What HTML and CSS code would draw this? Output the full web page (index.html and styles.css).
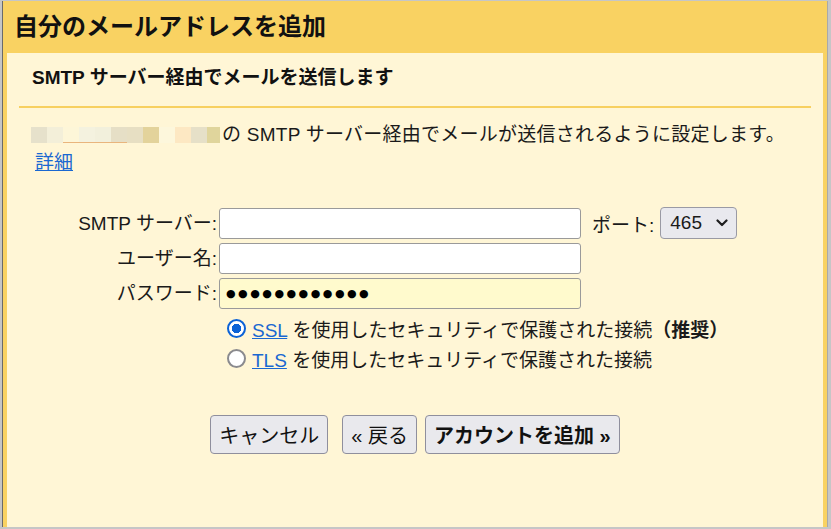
FILE: index.html
```html
<!DOCTYPE html>
<html lang="ja">
<head>
<meta charset="utf-8">
<title>自分のメールアドレスを追加</title>
<link rel="stylesheet" href="styles.css">
</head>
<body>
<div class="window">
  <div class="dialog">
    <div class="header">
      <h1 class="title">自分のメールアドレスを追加</h1>
    </div>
    <div class="panel">
      <h2 class="subtitle">SMTP サーバー経由でメールを送信します</h2>
      <div class="intro">
        <p class="desc"><span class="masked"><span class="blk b1"></span><span class="blk b2"></span><span class="blk b3 ul"></span><span class="blk b4 ul"></span><span class="blk b5 ul"></span><span class="blk b6 ul"></span><span class="blk b7"></span><span class="blk b8"></span><span class="blk b9"></span><span class="blk b10"></span><span class="blk b11"></span><span class="blk b12"></span></span>の SMTP サーバー経由でメールが送信されるように設定します。</p>
        <p class="more"><a class="link" href="#">詳細</a></p>
      </div>
      <div class="form">
        <label class="label" for="smtp">SMTP サーバー:</label>
        <div class="field-row">
          <input class="input" id="smtp" type="text">
          <span class="port-label">ポート:</span>
          <div class="select"><span class="select-value">465</span><svg class="chev" width="12" height="8" viewBox="0 0 12 8"><path d="M1.5 1.5 L6 6 L10.5 1.5" fill="none" stroke="#1f1f1f" stroke-width="2.2" stroke-linecap="round" stroke-linejoin="round"/></svg></div>
        </div>
        <label class="label" for="user">ユーザー名:</label>
        <div class="field-row">
          <input class="input" id="user" type="text">
        </div>
        <label class="label" for="pass">パスワード:</label>
        <div class="field-row">
          <div class="input input-pass" id="pass"><span class="dots">●●●●●●●●●●●●</span></div>
        </div>
        <div class="radios">
          <div class="radio-row">
            <span class="radio checked"></span>
            <span class="radio-text"><a class="link" href="#">SSL</a> を使用したセキュリティで保護された接続<b class="rec">（推奨）</b></span>
          </div>
          <div class="radio-row">
            <span class="radio"></span>
            <span class="radio-text"><a class="link" href="#">TLS</a> を使用したセキュリティで保護された接続</span>
          </div>
        </div>
      </div>
      <div class="buttons">
        <button class="btn btn-cancel" type="button">キャンセル</button>
        <button class="btn btn-back" type="button">« 戻る</button>
        <button class="btn btn-add" type="button">アカウントを追加 »</button>
      </div>
    </div>
  </div>
</div>
</body>
</html>
```

FILE: styles.css
```css
html, body {
  margin: 0;
  padding: 0;
}
body {
  width: 831px;
  height: 529px;
  overflow: hidden;
  background: #c6c6c6;
  font-family: "Liberation Sans", "Noto Sans CJK JP", sans-serif;
  color: #1a1a1a;
}
.window {
  height: 529px;
  box-sizing: border-box;
  padding: 1px 3px 2px 2px;
  display: flex;
}
.dialog {
  flex: 1;
  display: flex;
  flex-direction: column;
  background: #f9d262;
  border-left: 1px solid #6a6a6a;
  border-right: 1px solid #a9a9a9;
  padding: 0 4px;
}
.header {
  height: 52px;
  display: flex;
  align-items: center;
  flex-shrink: 0;
}
.title {
  margin: 0;
  padding-left: 7px;
  font-size: 24px;
  font-weight: bold;
  line-height: 30px;
  color: #111;
}
.panel {
  flex: 1;
  background: #fff6d6;
  padding: 0 12px;
}
.subtitle {
  margin: 0;
  font-size: 19px;
  font-weight: bold;
  line-height: 24px;
  padding: 13px 0 16px 13px;
  border-bottom: 2px solid #f7d060;
  color: #111;
}
.intro {
  margin-top: 13px;
  font-size: 19px;
  line-height: 28px;
}
.desc, .more {
  margin: 0;
  padding-left: 16px;
}
.desc {
  letter-spacing: 0.25px;
}
.masked {
  display: inline-flex;
  margin-left: -4px;
  margin-right: 2px;
  vertical-align: -2px;
}
.blk {
  width: 16px;
  height: 16px;
  box-sizing: border-box;
}
.blk.ul { border-bottom: 1px solid #e9b57d; }
.b1 { background: #e6e1cb; }
.b2 { background: #f3efd9; }
.b3 { background: #fdf6d8; }
.b4 { background: #f4f2df; }
.b5 { background: #f2f0dc; }
.b6 { background: #e6dfc6; }
.b7 { background: #e7dfc3; }
.b8 { background: #e3d39b; }
.b9 { background: #fdf7dc; }
.b10 { background: #fde8c3; }
.b11 { background: #e6e0c8; }
.b12 { background: #e0d59c; width: 13px; }
.link {
  color: #1a68d1;
  text-decoration: underline;
}
.form {
  margin-top: 31px;
  display: grid;
  grid-template-columns: 198px auto;
  column-gap: 2px;
  row-gap: 4px;
  font-size: 19px;
}
.label {
  text-align: right;
  align-self: center;
  line-height: 24px;
  white-space: nowrap;
}
.field-row {
  display: flex;
  align-items: center;
}
.input {
  width: 362px;
  height: 31px;
  box-sizing: border-box;
  border: 1px solid #9a9a9a;
  border-radius: 3px;
  background: #fff;
  margin: 0;
  padding: 0 6px;
  font-size: 16px;
  font-family: inherit;
}
.input-pass {
  background: #fffacd;
  display: flex;
  align-items: center;
}
.dots {
  font-family: "DejaVu Sans", sans-serif;
  font-size: 11px;
  letter-spacing: 2.5px;
  line-height: 1;
  color: #000;
}
.port-label {
  margin-left: 11px;
  white-space: nowrap;
}
.select {
  margin-left: 6px;
  width: 77px;
  height: 32px;
  box-sizing: border-box;
  border: 1px solid #9a9aa4;
  border-radius: 4px;
  background: #e9e9ee;
  display: flex;
  align-items: center;
  padding-left: 9px;
  margin-top: -2px;
}
.select-value {
  font-size: 19px;
}
.chev {
  margin-left: 14px;
}
.radios {
  grid-column: 2;
  padding-left: 8px;
}
.radio-row {
  height: 30px;
  display: flex;
  align-items: center;
  gap: 6px;
  white-space: nowrap;
}
.radio {
  width: 19px;
  height: 19px;
  box-sizing: border-box;
  border-radius: 50%;
  border: 2.5px solid #8a8a8e;
  background: #fff;
  flex-shrink: 0;
}
.radio.checked {
  border: 2.5px solid #0b62d6;
  background: radial-gradient(circle, #0b62d6 0 4.5px, #fff 5px);
}
.rec {
  font-weight: bold;
}
.buttons {
  margin-top: 42px;
  display: flex;
  justify-content: center;
}
.btn {
  height: 39px;
  box-sizing: border-box;
  border: 1px solid #8f8f9d;
  border-radius: 4px;
  background: #e9e9ed;
  color: #111;
  font-family: inherit;
  font-size: 20px;
  padding: 0 8px;
  margin: 0;
}
.btn-cancel { margin-right: 14px; }
.btn-back { margin-right: 8px; }
.btn-add { font-weight: bold; }
```
